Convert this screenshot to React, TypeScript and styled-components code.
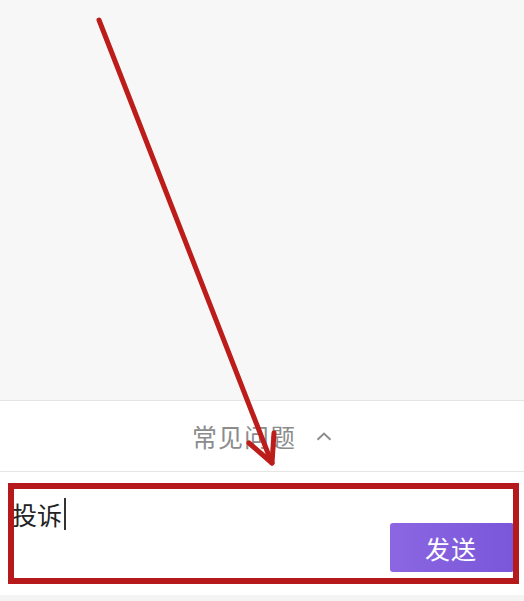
import React from "react";
import styled, { createGlobalStyle } from "styled-components";

const Global = createGlobalStyle`
  html, body { margin: 0; padding: 0; }
  body { font-family: "Noto Sans CJK SC", "Noto Sans", sans-serif; background: #f7f7f7; }
`;

const Page = styled.div`
  position: relative;
  width: 524px;
  height: 601px;
  display: flex;
  flex-direction: column;
  background: #f7f7f7;
  overflow: hidden;
`;

const ChatArea = styled.div`
  height: 400px;
  background: #f7f7f7;
`;

const FaqBar = styled.div`
  height: 70px;
  background: #fff;
  border-top: 1px solid #e4e4e4;
  border-bottom: 1px solid #e6e6e6;
  display: flex;
  align-items: center;
  justify-content: center;
  gap: 20px;
  padding-right: 0;
  box-sizing: content-box;
`;

const FaqText = styled.span`
  font-size: 25px;
  color: #8c8c8c;
  letter-spacing: 1px;
  line-height: 1;
`;

const InputArea = styled.div`
  position: relative;
  height: 123px;
  background: #fff;
  box-sizing: border-box;
  padding: 24px 10px 23px 12px;
  display: flex;
  justify-content: space-between;
  align-items: flex-start;
`;

const InputText = styled.div`
  font-size: 25px;
  line-height: 36px;
  color: #222;
  display: flex;
  align-items: center;
`;

const Caret = styled.span`
  display: inline-block;
  width: 1.5px;
  height: 32px;
  background: #333;
  margin-left: 2px;
`;

const SendButton = styled.button`
  align-self: flex-end;
  width: 124px;
  height: 49px;
  border: none;
  border-radius: 3px;
  background: linear-gradient(90deg, #8c66e2, #7957d9);
  color: #fff;
  font-family: "Noto Sans CJK SC", sans-serif;
  font-size: 25px;
  letter-spacing: 1px;
  padding: 0;
  text-indent: -2px;
`;

const Frame = styled.div`
  position: absolute;
  left: 8px;
  top: 11px;
  width: 511px;
  height: 101px;
  box-sizing: border-box;
  border: 6px solid #b5191b;
  pointer-events: none;
`;

const BottomStrip = styled.div`
  flex: 1;
  background: #f4f4f4;
`;

const Overlay = styled.svg`
  position: absolute;
  left: 0;
  top: 0;
  pointer-events: none;
`;

export default function App() {
  return (
    <Page>
      <Global />
      <ChatArea />
      <FaqBar>
        <FaqText>常见问题</FaqText>
        <svg width="16" height="9" viewBox="0 0 16 9">
          <path d="M1.5 7.8 L8 1.6 L14.5 7.8" fill="none" stroke="#8c8c8c" strokeWidth="2" />
        </svg>
      </FaqBar>
      <InputArea>
        <InputText>
          投诉<Caret />
        </InputText>
        <SendButton>发送</SendButton>
        <Frame />
      </InputArea>
      <BottomStrip />
      <Overlay width="524" height="601" viewBox="0 0 524 601">
        <g stroke="#bd1d1a" strokeWidth="5" strokeLinecap="round" fill="none">
          <line x1="99" y1="20" x2="271" y2="461" />
          <line x1="249" y1="443" x2="272" y2="463" />
          <line x1="274" y1="433" x2="272" y2="463" />
        </g>
      </Overlay>
    </Page>
  );
}
